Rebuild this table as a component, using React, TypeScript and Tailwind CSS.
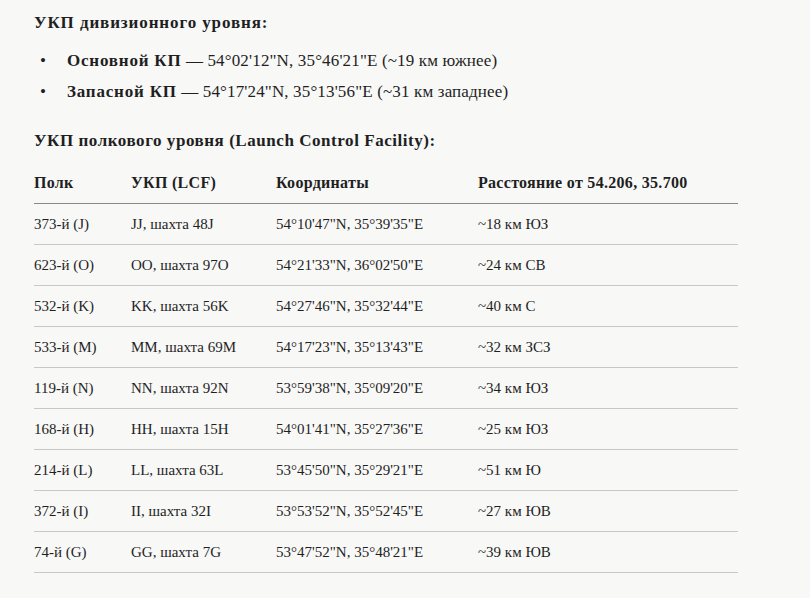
import React from "react";

const rows = [
  ["373-й (J)", "JJ, шахта 48J", "54°10'47\"N, 35°39'35\"E", "~18 км ЮЗ"],
  ["623-й (O)", "OO, шахта 97O", "54°21'33\"N, 36°02'50\"E", "~24 км СВ"],
  ["532-й (K)", "KK, шахта 56K", "54°27'46\"N, 35°32'44\"E", "~40 км С"],
  ["533-й (M)", "MM, шахта 69M", "54°17'23\"N, 35°13'43\"E", "~32 км ЗСЗ"],
  ["119-й (N)", "NN, шахта 92N", "53°59'38\"N, 35°09'20\"E", "~34 км ЮЗ"],
  ["168-й (H)", "HH, шахта 15H", "54°01'41\"N, 35°27'36\"E", "~25 км ЮЗ"],
  ["214-й (L)", "LL, шахта 63L", "53°45'50\"N, 35°29'21\"E", "~51 км Ю"],
  ["372-й (I)", "II, шахта 32I", "53°53'52\"N, 35°52'45\"E", "~27 км ЮВ"],
  ["74-й (G)", "GG, шахта 7G", "53°47'52\"N, 35°48'21\"E", "~39 км ЮВ"],
];

export default function App() {
  return (
    <div
      className="w-[810px] h-[598px] bg-[#f8f8f7] text-[#1f1f1f] overflow-hidden pl-[34px] pr-[72px] pt-[12px]"
      style={{ fontFamily: '"Liberation Serif", "DejaVu Serif", serif' }}
    >
      <div className="text-[17px] font-bold leading-[22px] tracking-[0.9px]">УКП дивизионного уровня:</div>
      <ul className="mt-[16px] flex flex-col gap-[9px] text-[17px] leading-[22px]">
        <li className="flex">
          <span className="w-[33px] pl-[6px]">•</span>
          <span className="tracking-[0.15px]">
            <b className="tracking-[0.8px]">Основной КП</b> — 54°02'12"N, 35°46'21"E (~19 км южнее)
          </span>
        </li>
        <li className="flex">
          <span className="w-[33px] pl-[6px]">•</span>
          <span className="tracking-[0.15px]">
            <b className="tracking-[0.8px]">Запасной КП</b> — 54°17'24"N, 35°13'56"E (~31 км западнее)
          </span>
        </li>
      </ul>
      <div className="mt-[27px] text-[17px] font-bold leading-[22px] tracking-[0.55px]">
        УКП полкового уровня (Launch Control Facility):
      </div>
      <div className="mt-[11px] text-[15px]">
        <div className="grid grid-cols-[97px_145px_202px_1fr] h-[41px] items-center font-bold text-[16px] tracking-[0.3px] border-b border-[#8a8a8a]">
          <div>Полк</div>
          <div>УКП (LCF)</div>
          <div>Координаты</div>
          <div>Расстояние от 54.206, 35.700</div>
        </div>
        {rows.map((r, i) => (
          <div
            key={i}
            className="grid grid-cols-[97px_145px_202px_1fr] h-[41px] items-center border-b border-[#c8c8c8]"
          >
            {r.map((c, j) => (
              <div key={j}>{c}</div>
            ))}
          </div>
        ))}
      </div>
    </div>
  );
}
